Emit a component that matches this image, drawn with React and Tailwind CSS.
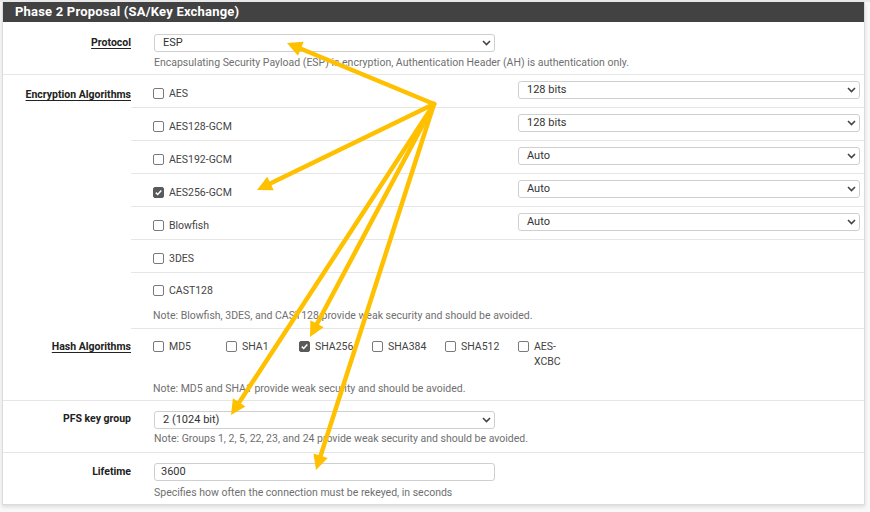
import React from "react";

const font = { fontFamily: "Roboto, 'Liberation Sans', sans-serif" };

function Chevron() {
  return (
    <svg width="9" height="6" viewBox="0 0 9 6" className="shrink-0">
      <polyline points="1,1 4.5,4.5 8,1" fill="none" stroke="#444" strokeWidth="1.6" />
    </svg>
  );
}

function Select({ value, className }) {
  return (
    <div
      className={`h-[18px] border border-[#cfcfcf] rounded-[3px] bg-white flex items-center justify-between pl-[8px] pr-[3px] text-[11px] text-[#333] ${className}`}
    >
      <span>{value}</span>
      <Chevron />
    </div>
  );
}

function Check({ checked, label }) {
  return (
    <div className="flex items-start gap-[5px] text-[10.5px] text-[#444] leading-[15px]">
      <span
        className={`mt-[2px] w-[11px] h-[11px] shrink-0 rounded-[2px] border flex items-center justify-center ${
          checked ? "bg-[#5a5a5a] border-[#5a5a5a]" : "bg-white border-[#7a7a7a]"
        }`}
      >
        {checked && (
          <svg width="9" height="9" viewBox="0 0 9 9">
            <polyline points="1.8,4.6 3.7,6.5 7.3,2.5" fill="none" stroke="#fff" strokeWidth="1.5" />
          </svg>
        )}
      </span>
      <span>{label}</span>
    </div>
  );
}

function Label({ children, underline }) {
  return (
    <div
      className={`w-[128px] shrink-0 text-right text-[10.5px] font-bold text-[#222] leading-[15px] ${
        underline ? "underline underline-offset-2" : ""
      }`}
    >
      {children}
    </div>
  );
}

function Help({ children }) {
  return <div className="text-[10.5px] text-[#6f6f6f] leading-[14px]">{children}</div>;
}

const enc = [
  { name: "AES", checked: false, sel: "128 bits" },
  { name: "AES128-GCM", checked: false, sel: "128 bits" },
  { name: "AES192-GCM", checked: false, sel: "Auto" },
  { name: "AES256-GCM", checked: true, sel: "Auto" },
  { name: "Blowfish", checked: false, sel: "Auto" },
  { name: "3DES", checked: false },
];

const hashes = [
  { name: "MD5" },
  { name: "SHA1" },
  { name: "SHA256", checked: true },
  { name: "SHA384" },
  { name: "SHA512" },
  { name: "AES-XCBC" },
];

function Arrows() {
  const o = [434, 104];
  const tips = [
    [287, 43],
    [257, 190],
    [310, 337],
    [231, 415],
    [316, 470],
  ];
  return (
    <svg className="absolute inset-0 pointer-events-none" width="870" height="512">
      {tips.map(([tx, ty], i) => {
        const dx = tx - o[0];
        const dy = ty - o[1];
        const len = Math.hypot(dx, dy);
        const ux = dx / len;
        const uy = dy / len;
        const hl = 15;
        const hw = 7.5;
        const bx = tx - ux * hl;
        const by = ty - uy * hl;
        const px = -uy;
        const py = ux;
        return (
          <g key={i}>
            <line x1={o[0]} y1={o[1]} x2={bx + ux * 2} y2={by + uy * 2} stroke="#FFC000" strokeWidth="4.5" strokeLinecap="round" />
            <polygon
              points={`${tx},${ty} ${bx + px * hw},${by + py * hw} ${bx - px * hw},${by - py * hw}`}
              fill="#FFC000"
            />
          </g>
        );
      })}
    </svg>
  );
}

export default function App() {
  return (
    <div className="relative w-[870px] h-[512px] bg-[#f9f9f9] overflow-hidden" style={font}>
      <div className="absolute left-0 top-0 w-[870px] h-[2px] bg-[#e8e8e8]" />
      <div className="ml-[2px] pt-[2px] w-[863px]">
        <div className="bg-white border border-[#dcdcdc] border-t-0 shadow-[0_2px_4px_rgba(0,0,0,0.12)]">
          <div className="h-[20px] bg-[#424242] text-white text-[13px] font-bold flex items-center pl-[12px] tracking-[0.2px]">
            Phase 2 Proposal (SA/Key Exchange)
          </div>

          {/* Protocol */}
          <div className="flex pt-[12px] pb-[5px] border-b border-[#e6e6e6] h-[53px]">
            <Label underline>
              <div className="pt-[1px]">Protocol</div>
            </Label>
            <div className="ml-[23px]">
              <Select value="ESP" className="w-[341px]" />
              <div className="mt-[4px]">
                <Help>Encapsulating Security Payload (ESP) is encryption, Authentication Header (AH) is authentication only.</Help>
              </div>
            </div>
          </div>

          {/* Encryption */}
          <div className="flex">
            <div className="w-[128px] shrink-0">
              <div className="pt-[12px]">
                <Label underline>Encryption Algorithms</Label>
              </div>
            </div>
            <div className="flex-1 flex flex-col">
              {enc.map((e) => (
                <div key={e.name} className="h-[33px] border-b border-[#e6e6e6] flex">
                  <div className="w-[387px] pl-[22px] pt-[11px]">
                    <Check label={e.name} checked={e.checked} />
                  </div>
                  {e.sel && (
                    <div className="pt-[6px]">
                      <Select value={e.sel} className="w-[342px]" />
                    </div>
                  )}
                </div>
              ))}
              <div className="h-[56px] border-b border-[#e6e6e6] pl-[22px] pt-[10px]">
                <Check label="CAST128" />
                <div className="mt-[11px]">
                  <Help>Note: Blowfish, 3DES, and CAST128 provide weak security and should be avoided.</Help>
                </div>
              </div>
            </div>
          </div>

          {/* Hash */}
          <div className="flex h-[72px] border-b border-[#e6e6e6] pt-[10px]">
            <Label underline>Hash Algorithms</Label>
            <div className="ml-[22px]">
              <div className="flex">
                {hashes.map((h) => (
                  <div key={h.name} className="w-[73px] pr-[14px]">
                    <Check label={h.name} checked={h.checked} />
                  </div>
                ))}
              </div>
              <div className="mt-[13px]">
                <Help>Note: MD5 and SHA1 provide weak security and should be avoided.</Help>
              </div>
            </div>
          </div>

          {/* PFS */}
          <div className="flex h-[52px] border-b border-[#e6e6e6] pt-[10px]">
            <Label>
              <div>PFS key group</div>
            </Label>
            <div className="ml-[23px]">
              <Select value="2 (1024 bit)" className="w-[341px]" />
              <div className="mt-[3px]">
                <Help>Note: Groups 1, 2, 5, 22, 23, and 24 provide weak security and should be avoided.</Help>
              </div>
            </div>
          </div>

          {/* Lifetime */}
          <div className="flex h-[51px] pt-[10px]">
            <Label>
              <div className="pt-[1px]">Lifetime</div>
            </Label>
            <div className="ml-[23px]">
              <div className="w-[341px] h-[18px] border border-[#cfcfcf] rounded-[3px] bg-white flex items-center pl-[6px] text-[11px] text-[#333]">
                3600
              </div>
              <div className="mt-[5px]">
                <Help>Specifies how often the connection must be rekeyed, in seconds</Help>
              </div>
            </div>
          </div>
        </div>
      </div>
      <Arrows />
    </div>
  );
}
